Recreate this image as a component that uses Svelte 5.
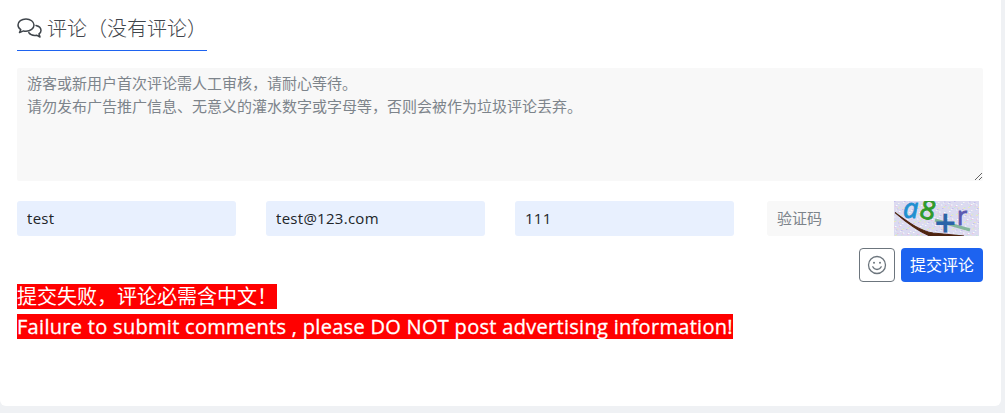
<script lang="ts">
  const placeholder =
    '游客或新用户首次评论需人工审核，请耐心等待。\n请勿发布广告推广信息、无意义的灌水数字或字母等，否则会被作为垃圾评论丢弃。';

  const fields = [
    { name: 'author', value: 'test' },
    { name: 'email', value: 'test@123.com' },
    { name: 'url', value: '111' }
  ];

  // speckles for the captcha background
  const colours = ['#c4bfee', '#eeeab4', '#c6ead8', '#eac4de', '#fafafa', '#cfdaf4', '#f2f2f2'];
  const noise = Array.from({ length: 420 }, (_, i) => ({
    x: (i * 37) % 85,
    y: ((i * 23) % 35) + (i % 3) / 2,
    fill: colours[(i * 5) % colours.length]
  }));
</script>

<div class="page">
  <section class="card">
    <h3 class="title">
      <svg class="chat" viewBox="0 0 25 20" width="25" height="20" fill="none" stroke="currentColor" stroke-width="1.5" stroke-linejoin="round" stroke-linecap="round">
        <path d="M9 1C4.600 1 1 3.600 1 7c0 1.900 1 3.500 2.800 4.600L2.500 14.600l4-1.700c.8.200 1.600.3 2.500.3 4.400 0 8-2.700 8-6.100S13.400 1 9 1z" />
        <path d="M19 7.500c3 .7 5 2.600 5 4.900 0 1.400-.7 2.600-2 3.500l1 3.100-3.500-1.800c-.6.100-1.200.2-1.800.2-2.600 0-4.800-1.100-5.900-2.800" />
      </svg>
      <span>评论（没有评论）</span>
    </h3>

    <textarea class="content" {placeholder}></textarea>

    <div class="fields">
      {#each fields as field}
        <input class="filled" name={field.name} value={field.value} />
      {/each}
      <div class="captcha">
        <input placeholder="验证码" />
        <svg viewBox="0 0 85 35" width="85" height="35" aria-label="验证码图片">
          <rect width="85" height="35" fill="#dcdaf0" />
          {#each noise as dot}
            <rect x={dot.x} y={dot.y} width="1.500" height="1" fill={dot.fill} />
          {/each}
          <path d="M1 11.500C14 21 26 30 39 32L70 35 36 35C24 30 12 21 1 11.500z" fill="#4e2410" stroke="#4e2410" stroke-width="1.100" />
          <path d="M41 19L76 29" stroke="#85b79c" stroke-width="3" />
          <text x="9" y="17" class="glyph" fill="#1f8fd0" stroke="#1f8fd0" stroke-width=".9" font-size="27">a</text>
          <text x="26" y="18" class="digit" fill="#2f9a2a" stroke="#2f9a2a" stroke-width=".9" font-size="27" transform="rotate(14 33 10)">8</text>
          <text x="41" y="35" class="digit" fill="#2a64a8" stroke="#2a64a8" stroke-width="1.200" font-size="36">+</text>
          <text x="63" y="24" class="digit" fill="#5a58b0" stroke="#5a58b0" stroke-width=".8" font-size="25">r</text>
        </svg>
      </div>
    </div>

    <div class="actions">
      <button class="emoji" type="button" aria-label="表情">
        <svg viewBox="0 0 20 20" width="20" height="20" fill="none" stroke="currentColor" stroke-width="1.300" stroke-linecap="round">
          <circle cx="10" cy="10" r="8.500" />
          <path d="M5.800 11.800c.9 1.800 2.400 2.700 4.200 2.700s3.300-.9 4.200-2.700" />
          <circle cx="7" cy="7.800" r="1" fill="currentColor" stroke="none" />
          <circle cx="13" cy="7.800" r="1" fill="currentColor" stroke="none" />
        </svg>
      </button>
      <button class="submit" type="button">提交评论</button>
    </div>

    <p class="error first">提交失败，评论必需含中文！</p>
    <p class="error latin">Failure to submit comments , please DO NOT post advertising information!</p>
  </section>
</div>

<style>
  :global(body) {
    background: #eff1f4;
    overflow: hidden;
  }

  .page {
    height: 413px;
    font-family: "Open Sans", "Noto Sans CJK SC", sans-serif;
  }

  .card {
    box-sizing: border-box;
    width: 1001px;
    height: 406px;
    padding: 0 18px 0 17px;
    background: #fff;
    border-radius: 0 0 6px 6px;
  }

  .title {
    display: flex;
    align-items: center;
    gap: 5px;
    box-sizing: border-box;
    width: 190px;
    height: 51px;
    margin: 0 0 17px;
    padding-top: 5px;
    border-bottom: 1px solid #1e63f0;
    color: #3f454b;
    font-size: 20px;
    font-weight: 300;
    white-space: nowrap;
  }

  .chat {
    flex: none;
  }

  .content {
    display: block;
    box-sizing: border-box;
    width: 100%;
    height: 113px;
    padding: 4px 10px;
    border: 0;
    border-radius: 2px;
    outline: 0;
    background: #f8f8f8;
    font: 15px/23px "Open Sans", "Noto Sans CJK SC", sans-serif;
  }

  .content::placeholder,
  .captcha input::placeholder {
    color: #7d848b;
    opacity: 1;
  }

  .fields {
    display: grid;
    grid-template-columns: repeat(4, 219px);
    gap: 30px;
    margin-top: 20px;
  }

  input {
    box-sizing: border-box;
    width: 100%;
    height: 35px;
    padding: 0 10px 2px;
    border: 0;
    border-radius: 3px;
    outline: 0;
    color: #212529;
    font: 15px "Open Sans", "Noto Sans CJK SC", sans-serif;
  }

  .filled {
    background: #e8f0fe;
    letter-spacing: 0.28px;
  }

  .captcha {
    display: flex;
    margin-left: 3px;
    width: 212px;
  }

  .captcha input {
    flex: 1;
    min-width: 0;
    background: #f8f8f8;
    border-radius: 3px 0 0 3px;
  }

  .captcha svg {
    flex: none;
    display: block;
  }

  .glyph {
    font-family: "Open Sans", sans-serif;
    font-style: italic;
  }

  .digit {
    font-family: "Open Sans", sans-serif;
  }

  .actions {
    display: flex;
    justify-content: flex-end;
    gap: 6px;
    margin-top: 12px;
    height: 34px;
  }

  button {
    box-sizing: border-box;
    height: 34px;
    padding: 0 0 2px;
    border-radius: 4px;
    font: 16px "Open Sans", "Noto Sans CJK SC", sans-serif;
  }

  .emoji {
    display: flex;
    align-items: center;
    justify-content: center;
    width: 36px;
    padding: 0;
    border: 1px solid #6c757d;
    background: #fff;
    color: #6c757d;
  }

  .submit {
    width: 82px;
    border: 0;
    background: #1d63f0;
    color: #fff;
  }

  .error {
    width: fit-content;
    margin: 5px 0 0;
    background: #f00;
    color: #fff;
    font-size: 20px;
    line-height: 25px;
    white-space: nowrap;
  }

  .error.first {
    margin-top: 2px;
  }

  .error.latin {
    letter-spacing: 0.3px;
    -webkit-text-stroke: 0.3px #fff;
  }
</style>
